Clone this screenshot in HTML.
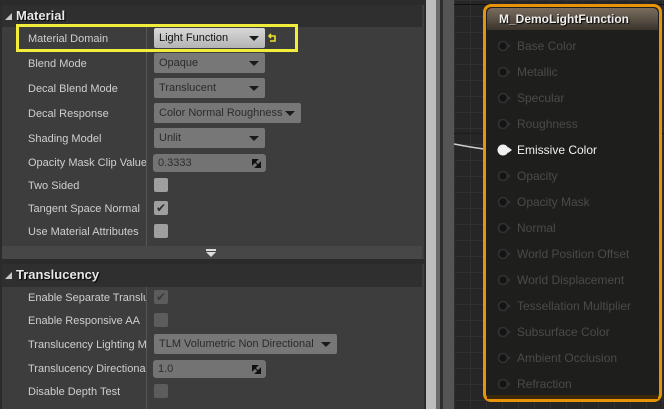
<!DOCTYPE html>
<html><head><meta charset="utf-8"><style>
*{margin:0;padding:0;box-sizing:border-box}
body{width:664px;height:409px;overflow:hidden;background:#262626;font-family:"Liberation Sans",sans-serif;position:relative}
.abs{position:absolute}
.panel{left:2px;top:0;width:422px;height:409px;background:#3d3d3d}
.hdr{left:2px;width:420px;height:22px;background:#2f2f2f;color:#e8e8e8;font-weight:bold;font-size:13px;line-height:22px;padding-left:14px;text-shadow:1px 1px 1px #000}
.tri{position:absolute;left:3px;top:8px;width:0;height:0;border-left:7px solid transparent;border-bottom:7px solid #c8c8c8}
.lbl{left:28px;width:118px;font-size:11px;color:#cfcfcf;white-space:nowrap;overflow:hidden;height:16px;line-height:16px}
.div{left:146px;width:1px;background:#555}
.dd{left:154px;height:20px;background:#777;border-radius:2px;color:#2b2b2b;font-size:11px;line-height:20px;padding-left:5px}
.dd:after{content:"";position:absolute;right:6px;top:8px;border-left:5px solid transparent;border-right:5px solid transparent;border-top:5px solid #1a1a1a}
.num{left:153px;width:113px;height:18px;background:#737373;border-radius:3px;font-size:11px;color:#2e2e2e;line-height:18px;padding-left:5px}
.num svg{position:absolute;right:5px;top:5px}
.cb{left:154px;width:14px;height:14px;border-radius:2px;background:#9f9f9f}
.cb.dis{background:#5c5c5c}
.ck{position:absolute;left:2px;top:1px;font-size:12px;color:#2e2e2e;line-height:12px}
.pn{left:517px;font-size:12px;color:#4a4a4a;line-height:14px}
</style></head><body>
<div class="abs" style="left:0;top:0;width:426px;height:409px;background:#2b2b2b"></div>
<div class="abs panel" style="top:5px;height:254px"></div>
<div class="abs" style="left:2px;top:246px;width:420px;height:13px;background:#474747"></div>
<div class="abs" style="left:206px;top:249px;width:10px;height:2px;background:#ddd"></div>
<div class="abs" style="left:206px;top:252px;border-left:5px solid transparent;border-right:5px solid transparent;border-top:5px solid #ddd"></div>
<div class="abs panel" style="top:264px;height:145px"></div>

<div class="abs hdr" style="top:5px"><span class="tri"></span>Material</div>
<div class="abs hdr" style="top:264px;height:23px"><span class="tri"></span>Translucency</div>

<div class="abs div" style="top:27px;height:219px"></div>
<div class="abs div" style="top:287px;height:122px"></div>

<div class="abs lbl" style="top:31px">Material Domain</div>
<div class="abs lbl" style="top:56px">Blend Mode</div>
<div class="abs lbl" style="top:81px">Decal Blend Mode</div>
<div class="abs lbl" style="top:106px">Decal Response</div>
<div class="abs lbl" style="top:131px">Shading Model</div>
<div class="abs lbl" style="top:155px">Opacity Mask Clip Value</div>
<div class="abs lbl" style="top:178px">Two Sided</div>
<div class="abs lbl" style="top:201px">Tangent Space Normal</div>
<div class="abs lbl" style="top:224px">Use Material Attributes</div>

<div class="abs dd" style="top:28px;width:111px;background:linear-gradient(#d8d8d8,#b4b4b4);color:#111">Light Function</div>
<svg class="abs" style="left:268px;top:32px" width="10" height="12"><path d="M3 2 L1 4 L3 6 M1 4 H7 V9 H2" stroke="#e8e030" stroke-width="1.6" fill="none"/></svg>
<div class="abs dd" style="top:53px;width:111px">Opaque</div>
<div class="abs dd" style="top:78px;width:111px">Translucent</div>
<div class="abs dd" style="top:103px;width:147px">Color Normal Roughness</div>
<div class="abs dd" style="top:128px;width:111px">Unlit</div>
<div class="abs num" style="top:154px">0.3333<svg width="9" height="9"><path d="M0 0H6L0 6Z M9 9H3L9 3Z M1 1L8 8" fill="#111" stroke="#111" stroke-width="1.2"/></svg></div>
<div class="abs cb" style="top:178px"></div>
<div class="abs cb" style="top:201px"><span class="ck">✔</span></div>
<div class="abs cb" style="top:224px"></div>

<div class="abs" style="left:16px;top:24px;width:282px;height:28px;border:3px solid #f2ec3a"></div>

<div class="abs lbl" style="top:290px">Enable Separate Translucency</div>
<div class="abs lbl" style="top:313px">Enable Responsive AA</div>
<div class="abs lbl" style="top:337px">Translucency Lighting Mode</div>
<div class="abs lbl" style="top:361px">Translucency Directional</div>
<div class="abs lbl" style="top:384px">Disable Depth Test</div>
<div class="abs cb dis" style="top:290px"><span class="ck" style="color:#3a3a3a">✔</span></div>
<div class="abs cb dis" style="top:313px"></div>
<div class="abs dd" style="top:334px;width:183px">TLM Volumetric Non Directional</div>
<div class="abs num" style="top:360px">1.0<svg width="9" height="9"><path d="M0 0H6L0 6Z M9 9H3L9 3Z M1 1L8 8" fill="#111" stroke="#111" stroke-width="1.2"/></svg></div>
<div class="abs cb dis" style="top:384px"></div>

<div class="abs" style="left:426px;top:0;width:10px;height:409px;background:#bdbdbd"></div>
<div class="abs" style="left:436px;top:0;width:4px;height:409px;background:#6a6a6a"></div>
<div class="abs" style="left:440px;top:0;width:3px;height:409px;background:#2e2e2e"></div>
<div class="abs" style="left:443px;top:0;width:11px;height:409px;background:#555"></div>

<div class="abs" style="left:454px;top:0;width:210px;height:409px;background-color:#262626;background-image:linear-gradient(#303030 1px,transparent 1px),linear-gradient(90deg,#303030 1px,transparent 1px);background-size:16px 16px"></div>
<div class="abs" style="left:454px;top:4px;width:210px;height:1px;background:#111"></div>
<div class="abs" style="left:454px;top:133px;width:210px;height:1px;background:#1c1c1c"></div>
<svg class="abs" style="left:454px;top:140px" width="40" height="14"><path d="M0 4 Q20 8 38 10" stroke="#cfcfcf" stroke-width="1.5" fill="none"/></svg>

<div class="abs" style="left:483px;top:4px;width:179px;height:398px;border:3px solid #e8940a;border-radius:8px;background:#1e1f1d"></div>
<div class="abs" style="left:487px;top:8px;width:171px;height:22px;border-radius:5px 5px 0 0;background:linear-gradient(#7a6d5e,#3a342c);color:#eee;font-weight:bold;font-size:12px;line-height:22px;padding-left:12px;text-shadow:1px 1px 1px #000">M_DemoLightFunction</div>
<div class="abs" style="left:487px;top:395px;width:171px;height:4px;background:#3a2808"></div>

<svg class="abs" style="left:496px;top:0" width="18" height="409">
<g fill="#141414" stroke="#333" stroke-width="1.5">
<circle cx="7" cy="46" r="4.5"/><circle cx="7" cy="72" r="4.5"/><circle cx="7" cy="98" r="4.5"/><circle cx="7" cy="124" r="4.5"/>
<circle cx="7" cy="176" r="4.5"/><circle cx="7" cy="202" r="4.5"/><circle cx="7" cy="228" r="4.5"/><circle cx="7" cy="254" r="4.5"/>
<circle cx="7" cy="280" r="4.5"/><circle cx="7" cy="306" r="4.5"/><circle cx="7" cy="332" r="4.5"/><circle cx="7" cy="358" r="4.5"/><circle cx="7" cy="384" r="4.5"/>
</g>
<g fill="#333">
<path d="M12 44L15 46L12 48Z"/><path d="M12 70L15 72L12 74Z"/><path d="M12 96L15 98L12 100Z"/><path d="M12 122L15 124L12 126Z"/>
<path d="M12 174L15 176L12 178Z"/><path d="M12 200L15 202L12 204Z"/><path d="M12 226L15 228L12 230Z"/><path d="M12 252L15 254L12 256Z"/>
<path d="M12 278L15 280L12 282Z"/><path d="M12 304L15 306L12 308Z"/><path d="M12 330L15 332L12 334Z"/><path d="M12 356L15 358L12 360Z"/><path d="M12 382L15 384L12 386Z"/>
</g>
<circle cx="7" cy="150" r="5.5" fill="#f0f0f0"/><path d="M12 147 L16 150 L12 153Z" fill="#f0f0f0"/>
</svg>
<div class="abs pn" style="top:39px">Base Color</div>
<div class="abs pn" style="top:65px">Metallic</div>
<div class="abs pn" style="top:91px">Specular</div>
<div class="abs pn" style="top:117px">Roughness</div>
<div class="abs pn" style="top:143px;color:#f0f0f0">Emissive Color</div>
<div class="abs pn" style="top:169px">Opacity</div>
<div class="abs pn" style="top:195px">Opacity Mask</div>
<div class="abs pn" style="top:221px">Normal</div>
<div class="abs pn" style="top:247px">World Position Offset</div>
<div class="abs pn" style="top:273px">World Displacement</div>
<div class="abs pn" style="top:299px">Tessellation Multiplier</div>
<div class="abs pn" style="top:325px">Subsurface Color</div>
<div class="abs pn" style="top:351px">Ambient Occlusion</div>
<div class="abs pn" style="top:377px">Refraction</div>
</body></html>
